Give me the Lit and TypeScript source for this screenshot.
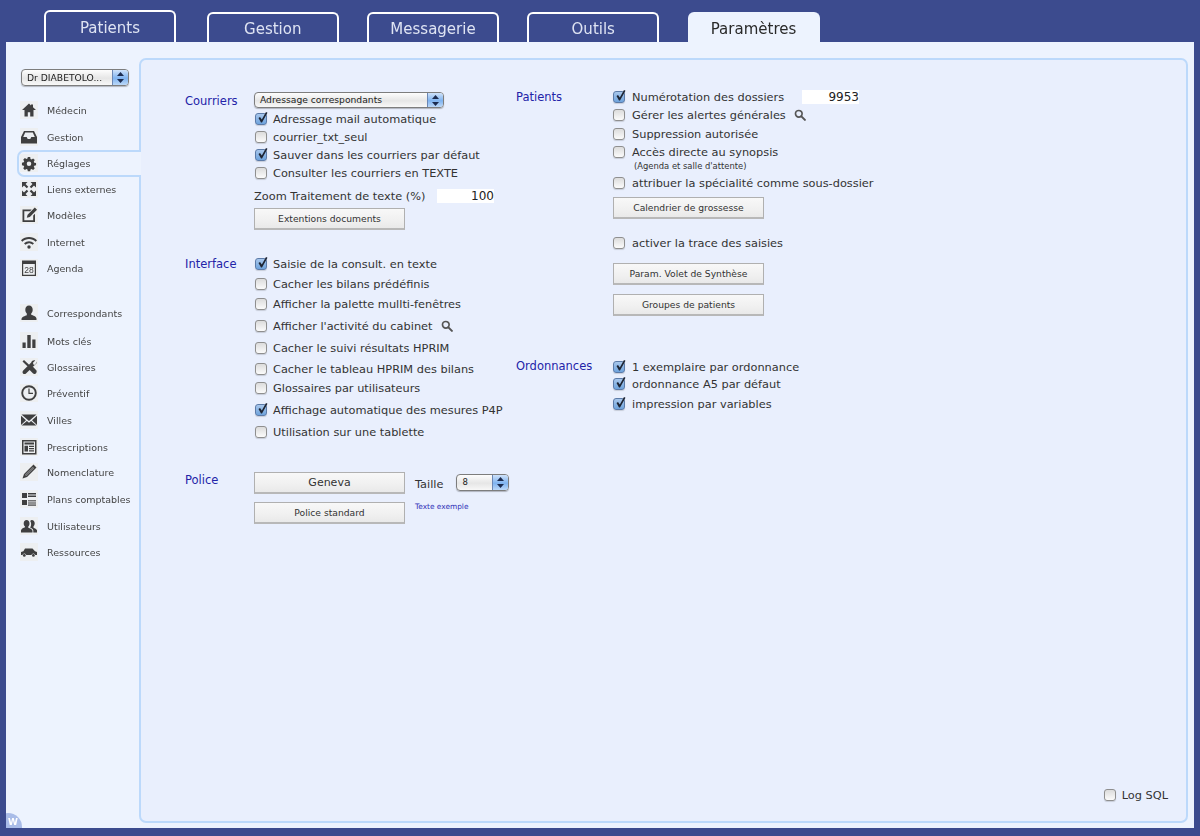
import { LitElement, html, css, svg } from "lit";
import { customElement } from "lit/decorators.js";

const ICONS: Record<string, unknown> = {
  home: svg`<path d="M9 2.500 2 9h2.500v6.500h3.300v-4.200h2.400v4.200h3.300V9H16l-3-2.800V3.500h-2v1z"/>`,
  tray: svg`<path d="M4 3h10l3 6v6.500H1V9zM5.200 4.500 3.200 9h3.500l1 2h2.600l1-2h3.500l-2-4.500z" fill-rule="evenodd"/>`,
  gear: svg`<g transform="translate(9 9) scale(.84) translate(-9 -8.500)"><path fill-rule="evenodd" d="M7.600 1.500h2.800l.4 2.100 1.300.6 1.800-1.200 2 2-1.200 1.800.6 1.300 2.100.4v2.800l-2.100.4-.6 1.300 1.200 1.800-2 2-1.800-1.200-1.300.6-.4 2.100H7.600l-.4-2.100-1.300-.6-1.800 1.200-2-2 1.200-1.800-.6-1.300-2.100-.4V8.100l2.100-.4.6-1.300L2.100 4.600l2-2 1.800 1.200 1.300-.6zM9 6.800a2.700 2.700 0 1 0 0 5.400 2.700 2.700 0 0 0 0-5.400z"/></g>`,
  expand: svg`<path d="M2 2h5.500L2 7.500zM16 2v5.500L10.500 2zM2 16v-5.500L7.500 16zM16 16h-5.500l5.500-5.500z"/><path d="M4 4l3.500 3.500M14 4l-3.500 3.500M4 14l3.500-3.500M14 14l-3.500-3.500" stroke="currentColor" stroke-width="2.200" fill="none"/>`,
  edit: svg`<path d="M2.500 3.500h9.200L10 5.300H4.300v8.900h8.900V9.500L15 7.700v8.300H2.500z"/><path d="M14.800 1.500 17 3.700 9.800 11l-3 .8.800-3z"/>`,
  wifi: svg`<path d="M1 7.300C5.500 3 12.500 3 17 7.300l-1.300 1.400C12 5.200 6 5.200 2.300 8.700z"/><path d="M4 10.300c3-2.800 7-2.800 10 0l-1.400 1.400c-2.200-2-5-2-7.200 0z"/><circle cx="9" cy="14" r="1.700"/>`,
  cal: svg`<path d="M2 1.500h14v3.500H2z"/><path fill="none" stroke="currentColor" stroke-width="1.200" d="M2.600 3h12.800v13.400H2.600z"/><text x="9" y="14.400" font-family="Liberation Sans, sans-serif" font-size="8.500" text-anchor="middle" fill="currentColor">28</text>`,
  person: svg`<path d="M9 1.500c2.300 0 3.700 1.800 3.700 4.200 0 1.600-.7 3-1.500 3.800v1.300c1.800.8 5 1.500 5.300 3.700v1.500h-15V15c.3-2.200 3.500-2.900 5.300-3.700V9.500C6 8.700 5.300 7.300 5.300 5.700c0-2.400 1.400-4.200 3.700-4.200z"/>`,
  bars: svg`<path d="M2.500 10.500h3.200V16H2.500zM7.300 3h3.400v13H7.300zM12.300 7.500h3.200V16h-3.200z"/>`,
  tools: svg`<path d="M2.500 3.500 4 2l7.500 7 1.200-.4 3.800 3.800c.5 1 0 2.800-1.100 3.400-.8.400-1.700.4-2.300-.2l-3.700-3.800.3-1.200zM16.500 3.500c.300 1.700-.4 3.300-2 3.800L6 15.500c-.8.800-2.300.8-3 0-.7-.8-.6-2.100.2-2.900l8-8c.5-1.700 2.300-2.600 4-2.100l-2.200 2.200.4 1.900 1.900.4z"/>`,
  clock: svg`<circle cx="9" cy="9" r="6.800" fill="none" stroke="currentColor" stroke-width="1.900"/><path d="M8.400 4.500h1.200v4.200H13v1.200H8.400z"/>`,
  mail: svg`<path d="M1.500 3.500h15L9 10zM1 4.800 6 9.200 1 14zM17 4.800 12 9.200l5 4.800zM6.900 10 9 11.800l2.100-1.800 5.300 4.500H1.600z"/>`,
  news: svg`<path fill-rule="evenodd" d="M2 2h14.500v14.500H2zM3.500 3.500V15H15V3.500z"/><path d="M4.500 4.500h9.500v2H4.500zM4.500 7.700H8v5.800H4.500zM9 7.700h5v1.300H9zM9 10h5v1.300H9zM9 12.300h5v1.300H9z"/>`,
  pencil: svg`<path d="M13.500 1.500 16.500 4.500 7 14 2.500 15.500 4 11zM12.700 4 5 11.700l1.300 1.300L14 5.300z" fill-rule="evenodd"/><path d="m12.700 4 1.300 1.300L6.300 13 5 11.700z" opacity=".75"/>`,
  list: svg`<path d="M2 3h5v5H2zM8 3h8v1.500H8zM8 5.500h8V7H8zM2 10h5v5H2z"/><path opacity=".7" d="M8 10h8v1.500H8zM8 12.200h8v1.500H8zM8 14.300h8V16H8z"/>`,
  users: svg`<path d="M6.500 3c1.900 0 3 1.500 3 3.400 0 1.300-.5 2.400-1.200 3.100v1.300c1.600.6 3.800 1.300 4.200 3V15.500H1v-2.200c.4-1.700 2.600-2.400 4-3V9.500C4.200 8.800 3.700 7.700 3.700 6.400 3.700 4.500 4.800 3 6.500 3z"/><path d="M11.800 3c1.800 0 2.900 1.500 2.900 3.300 0 1.300-.5 2.300-1.200 3v1.400c1.400.6 3 1.100 3.500 2.600v2.200h-3.700v-2.300c-.5-1.200-2-2.100-3.200-2.600.8-1.100 1.100-2.400 1-3.800-.1-1-.3-2-.9-2.700.5-.7 1.100-1.100 1.600-1.100z"/>`,
  car: svg`<path fill-rule="evenodd" d="M5 5.500h7.500L15 8.300l2 .6v3.100h-1.700a2 2 0 0 0-3.900 0H6.300a2 2 0 0 0-3.900 0H1V8.900l2.400-.6z"/><circle cx="4.300" cy="12.400" r="1.400"/><circle cx="13.400" cy="12.400" r="1.400"/>`,
};

type Side = { label: string; icon: string; gap: number; active?: boolean };
const SIDE: Side[] = [
  { label: "Médecin", icon: "home", gap: 0 },
  { label: "Gestion", icon: "tray", gap: 7 },
  { label: "Réglages", icon: "gear", gap: 6, active: true },
  { label: "Liens externes", icon: "expand", gap: 6 },
  { label: "Modèles", icon: "edit", gap: 6 },
  { label: "Internet", icon: "wifi", gap: 7 },
  { label: "Agenda", icon: "cal", gap: 6 },
  { label: "Correspondants", icon: "person", gap: 25 },
  { label: "Mots clés", icon: "bars", gap: 8 },
  { label: "Glossaires", icon: "tools", gap: 6 },
  { label: "Préventif", icon: "clock", gap: 6 },
  { label: "Villes", icon: "mail", gap: 7 },
  { label: "Prescriptions", icon: "news", gap: 7 },
  { label: "Nomenclature", icon: "pencil", gap: 5 },
  { label: "Plans comptables", icon: "list", gap: 7 },
  { label: "Utilisateurs", icon: "users", gap: 7 },
  { label: "Ressources", icon: "car", gap: 6 },
];

type Check = { label: string; on?: boolean; gap: number; search?: boolean };
const COURRIERS: Check[] = [
  { label: "Adressage mail automatique", on: true, gap: 4 },
  { label: "courrier_txt_seul", gap: 4 },
  { label: "Sauver dans les courriers par défaut", on: true, gap: 4 },
  { label: "Consulter les courriers en TEXTE", gap: 4 },
];
const INTERFACE: Check[] = [
  { label: "Saisie de la consult. en texte", on: true, gap: 0 },
  { label: "Cacher les bilans prédéfinis", gap: 6 },
  { label: "Afficher la palette mullti-fenêtres", gap: 6 },
  { label: "Afficher l'activité du cabinet", gap: 8, search: true },
  { label: "Cacher le suivi résultats HPRIM", gap: 8 },
  { label: "Cacher le tableau HPRIM des bilans", gap: 7 },
  { label: "Glossaires par utilisateurs", gap: 5 },
  { label: "Affichage automatique des mesures P4P", on: true, gap: 8 },
  { label: "Utilisation sur une tablette", gap: 8 },
];
const ORDO: Check[] = [
  { label: "1 exemplaire par ordonnance", on: true, gap: 0 },
  { label: "ordonnance A5 par défaut", on: true, gap: 3 },
  { label: "impression par variables", on: true, gap: 6 },
];

const TABS = ["Patients", "Gestion", "Messagerie", "Outils", "Paramètres"];

@customElement("app-root")
export class AppRoot extends LitElement {
  static styles = css`
    :host { display: block; width: 1200px; height: 836px; background: #3c4b8e; overflow: hidden;
      font-family: "DejaVu Sans", sans-serif; color: #333; }
    * { box-sizing: border-box; }
    .page { height: 836px; display: flex; flex-direction: column; padding: 0 6px 8px; filter: blur(.35px); }
    .tabs { height: 42px; display: flex; align-items: flex-end; gap: 28.25px; padding-left: 38px; flex: none; }
    .tab { width: 132px; height: 30px; border: 2px solid #fff; border-bottom: none; border-radius: 6px 6px 0 0;
      color: #dfe4f3; font-size: 15px; display: flex; align-items: center; justify-content: center; padding-top: 1px; }
    .tab:first-child { height: 32px; margin-right: 2.5px; }
    .tab.on { background: #edf3fe; border-color: #edf3fe; color: #2a2a2a; }
    .sheet { flex: 1; background: #edf3fe; display: flex; position: relative; overflow: hidden; padding: 16px 6px 5px 0; }
    .wbadge { position: absolute; left: -12px; bottom: -13px; width: 28px; height: 28px; border-radius: 50%;
      background: #a9bce8; color: #fff; font: bold 9px "DejaVu Sans", sans-serif; }
    .wbadge span { position: absolute; left: 14px; top: 4px; }
    .side { width: 133px; flex: none; position: relative; z-index: 1; padding: 11px 0 0 14px; }
    .drwrap { margin: 0 0 14px; }
    .item { height: 20px; display: flex; align-items: center; gap: 9px; font-size: 9.5px; color: #444; position: relative; isolation: isolate; }
    .item.active::before { content: ""; box-sizing: border-box; position: absolute; z-index: -1; left: -3px; right: -2px; top: -3px; height: 27px;
      background: #edf3fe; border: 2px solid #bcd9fb; border-right: none; border-radius: 7px 0 0 7px; }
    .ico { width: 18px; height: 18px; flex: none; background: #edeff1; color: #3f3f3f; fill: currentColor; display: block; }
    .panel { flex: 1; background: #e9effd; border: 2px solid #bcd9fb; border-radius: 7px; display: flex; flex-direction: column;
      padding: 32px 18px 19px 44px; }
    .cols { display: flex; flex: 1; }
    .left { width: 331px; flex: none; }
    .sec { display: grid; }
    .left .sec { grid-template-columns: 69px 1fr; }
    .right .sec { grid-template-columns: 97px 1fr; }
    .cap { color: #2323a8; font-size: 11.5px; line-height: 14px; }
    .stack { display: flex; flex-direction: column; }
    .right .stack { margin-left: -1px; }
    .right .btn { margin-left: 1px; }
    .row { height: 14px; display: flex; align-items: center; font-size: 11.35px; white-space: nowrap; color: #333; }
    .cb { width: 12px; height: 12px; margin: 0 6px 0 1px; flex: none; position: relative; border: 1px solid #8f8f8f; border-radius: 3px;
      background: linear-gradient(#dcdcdc, #fbfbfb); box-shadow: 0 1px 1px rgba(0,0,0,.15); }
    .right .cb { margin-right: 7px; }
    .cb.on { background: linear-gradient(#a8c7ec, #6ea3dd); border-color: #5c7ba8; }
    .cb svg { position: absolute; left: 0; top: -3px; width: 13px; height: 13px; }
    .search { width: 12px; height: 12px; margin-left: 8px; }
    .num { background: #fff; width: 57px; height: 14px; margin-left: 9px; text-align: right; font-size: 12px; line-height: 14px; color: #222; }
    .select { position: relative; height: 16px; border: 1px solid #7d7d7d; border-radius: 4px; font-size: 9.2px; line-height: 14px; padding-left: 5px;
      background: linear-gradient(#fdfdfd, #e6e6e6 55%, #f8f8f8); box-shadow: 0 1px 1px rgba(0,0,0,.25); color: #222; overflow: hidden; }
    .select i { position: absolute; right: 0; top: 0; bottom: 0; width: 16px; background: linear-gradient(#cfe2fa, #7fb3f0 55%, #bcd8f8);
      border-left: 1px solid #6b87b5; display: flex; align-items: center; justify-content: center; }
    .select svg { width: 7px; height: 11px; display: block; }
    .select.dr { height: 17px; width: 108px; font-size: 9.2px; line-height: 15px; margin-left: 1px; }
    .btn { width: 151px; height: 22px; flex: none; border: 1px solid #b0b0b0; border-bottom: 2px solid #b8b8b8; background: linear-gradient(#f8f8f8, #f0f0f0 60%, #e9e9e9);
      font-size: 9.2px; color: #333; display: flex; align-items: center; justify-content: center; }
    .btn.big { font-size: 11px; }
    .flexrow { display: flex; align-items: flex-start; }
    .taille { font-size: 11.35px; margin: 5px 0 0 10px; line-height: 14px; }
    .select.size { width: 53px; margin: 2px 0 0 13px; height: 17px; font-size: 8.5px; line-height: 15px; }
    .sample { color: #3030b8; font-size: 7.4px; margin: 0 0 0 10px; line-height: 10px; }
    .note { font-size: 8.4px; height: 10px; line-height: 10px; margin: 2px 0 0 22px; color: #333; }
    .log { display: flex; justify-content: flex-end; }
  `;

  private icon(name: string) {
    return html`<svg class="ico" viewBox="0 0 18 18">${ICONS[name]}</svg>`;
  }
  private gap(n: number) {
    return `margin-top:${n}px`;
  }
  private updown() {
    return html`<i><svg viewBox="0 0 7 11"><path d="M3.500 0 7 4H0zM0 7h7l-3.500 4z" fill="#1c2b4f"/></svg></i>`;
  }
  private box(on?: boolean) {
    return html`<span class="cb ${on ? "on" : ""}">${on
      ? html`<svg viewBox="0 0 13 13"><path d="M2.500 7 4 6l1.800 2.600L10 1l1.500.8L6 11.500H5z" fill="#1d2433"/></svg>`
      : ""}</span>`;
  }
  private mag() {
    return html`<svg class="search" viewBox="0 0 13 13"><circle cx="5.200" cy="5.200" r="3.600" fill="none" stroke="#555" stroke-width="1.800"/><path d="M8 8l3.800 3.800" stroke="#555" stroke-width="2.200" stroke-linecap="round"/></svg>`;
  }
  private check(c: Check) {
    return html`<div class="row" style=${this.gap(c.gap)}>${this.box(c.on)}<span>${c.label}</span>${c.search ? this.mag() : ""}</div>`;
  }
  private plain(label: string, gap: number, on = false) {
    return this.check({ label, gap, on });
  }

  render() {
    return html`<div class="page">
      <div class="tabs">${TABS.map((t, i) => html`<div class="tab ${i === 4 ? "on" : ""}">${t}</div>`)}</div>
      <div class="sheet">
        <div class="side">
          <div class="drwrap"><div class="select dr">Dr DIABETOLO...${this.updown()}</div></div>
          ${SIDE.map((s) => html`<div class="item ${s.active ? "active" : ""}" style=${this.gap(s.gap)}>${this.icon(s.icon)}<span>${s.label}</span></div>`)}
        </div>
        <div class="panel">
          <div class="cols">
            <div class="left">
              <div class="sec">
                <div class="cap" style=${this.gap(2)}>Courriers</div>
                <div class="stack">
                  <div class="select" style="width:190px">Adressage correspondants${this.updown()}</div>
                  ${COURRIERS.map((c) => this.check(c))}
                  <div class="row" style=${this.gap(9)}><span style="width:174px">Zoom Traitement de texte (%)</span><span class="num">100</span></div>
                  <div class="btn" style=${this.gap(5)}>Extentions documents</div>
                </div>
              </div>
              <div class="sec" style=${this.gap(27)}>
                <div class="cap">Interface</div>
                <div class="stack">${INTERFACE.map((c) => this.check(c))}</div>
              </div>
              <div class="sec" style=${this.gap(33)}>
                <div class="cap" style=${this.gap(1)}>Police</div>
                <div class="stack">
                  <div class="flexrow">
                    <div class="btn big">Geneva</div>
                    <span class="taille">Taille</span>
                    <div class="select size">8${this.updown()}</div>
                  </div>
                  <div class="flexrow" style=${this.gap(8)}>
                    <div class="btn">Police standard</div>
                    <span class="sample">Texte exemple</span>
                  </div>
                </div>
              </div>
            </div>
            <div class="right">
              <div class="sec">
                <div class="cap" style=${this.gap(-2)}>Patients</div>
                <div class="stack" style=${this.gap(-2)}>
                  <div class="row">${this.box(true)}<span style="width:170px">Numérotation des dossiers</span><span class="num" style="margin:0">9953</span></div>
                  ${this.check({ label: "Gérer les alertes générales", gap: 4, search: true })}
                  ${this.plain("Suppression autorisée", 5)}
                  ${this.plain("Accès directe au synopsis", 4)}
                  <div class="note">(Agenda et salle d'attente)</div>
                  ${this.plain("attribuer la spécialité comme sous-dossier", 5)}
                  <div class="btn" style=${this.gap(7)}>Calendrier de grossesse</div>
                  ${this.plain("activer la trace des saisies", 17)}
                  <div class="btn" style=${this.gap(13)}>Param. Volet de Synthèse</div>
                  <div class="btn" style=${this.gap(9)}>Groupes de patients</div>
                </div>
              </div>
              <div class="sec" style=${this.gap(44)}>
                <div class="cap" style=${this.gap(-1)}>Ordonnances</div>
                <div class="stack">${ORDO.map((c) => this.check(c))}</div>
              </div>
            </div>
          </div>
          <div class="log"><div class="row">${this.box(false)}<span>Log SQL</span></div></div>
        </div>
        <div class="wbadge"><span>W</span></div>
      </div>
    </div>`;
  }
}
